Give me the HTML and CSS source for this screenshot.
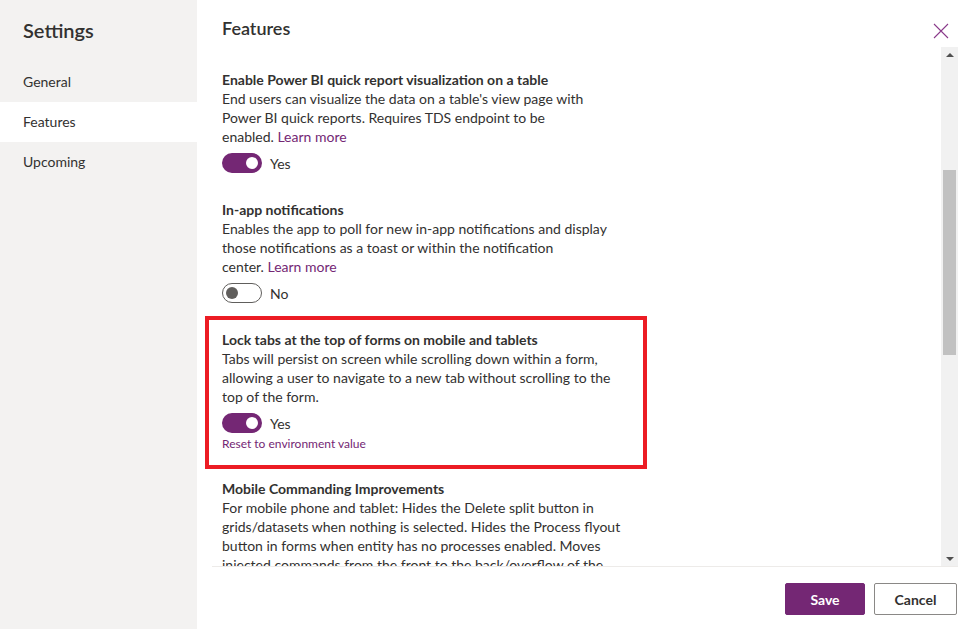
FILE: index.html
```html
<!DOCTYPE html>
<html>
<head>
<meta charset="utf-8">
<link rel="stylesheet" href="styles.css">
</head>
<body>
<div class="page">
  <aside class="sidebar">
    <h1 class="sidebar-title">Settings</h1>
    <nav class="nav">
      <div class="nav-item">General</div>
      <div class="nav-item active">Features</div>
      <div class="nav-item">Upcoming</div>
    </nav>
  </aside>
  <main class="main">
    <header class="header">
      <h2 class="header-title">Features</h2>
      <button class="close" aria-label="Close">
        <svg width="16" height="16" viewBox="0 0 16 16"><path d="M1 1 L15 15 M15 1 L1 15" stroke="#8a3a8a" stroke-width="1.1" fill="none"/></svg>
      </button>
    </header>
    <div class="scroll-row">
      <div class="content">
        <section class="item">
          <div class="item-title">Enable Power BI quick report visualization on a table</div>
          <div class="item-desc">End users can visualize the data on a table's view page with<br>Power BI quick reports. Requires TDS endpoint to be<br>enabled. <a class="link">Learn more</a></div>
          <div class="toggle-row"><span class="toggle on"><span class="knob"></span></span><span class="toggle-label">Yes</span></div>
        </section>
        <section class="item">
          <div class="item-title">In-app notifications</div>
          <div class="item-desc">Enables the app to poll for new in-app notifications and display<br>those notifications as a toast or within the notification<br>center. <a class="link">Learn more</a></div>
          <div class="toggle-row"><span class="toggle off"><span class="knob"></span></span><span class="toggle-label">No</span></div>
        </section>
        <section class="item highlight">
          <div class="item-title">Lock tabs at the top of forms on mobile and tablets</div>
          <div class="item-desc">Tabs will persist on screen while scrolling down within a form,<br>allowing a user to navigate to a new tab without scrolling to the<br>top of the form.</div>
          <div class="toggle-row"><span class="toggle on"><span class="knob"></span></span><span class="toggle-label">Yes</span></div>
          <div class="reset">Reset to environment value</div>
        </section>
        <section class="item">
          <div class="item-title">Mobile Commanding Improvements</div>
          <div class="item-desc">For mobile phone and tablet: Hides the Delete split button in<br>grids/datasets when nothing is selected. Hides the Process flyout<br>button in forms when entity has no processes enabled. Moves<br>injected commands from the front to the back/overflow of the</div>
        </section>
      </div>
      <div class="scrollbar">
        <div class="arrow up"></div>
        <div class="track"><div class="thumb"></div></div>
        <div class="arrow down"></div>
      </div>
    </div>
    <footer class="footer">
      <button class="btn primary">Save</button>
      <button class="btn secondary">Cancel</button>
    </footer>
  </main>
</div>
</body>
</html>
```

FILE: styles.css
```css
*, *::before, *::after { box-sizing: border-box; }
html, body { margin: 0; padding: 0; }
body {
  font-family: Lato, "Open Sans", "Liberation Sans", sans-serif;
  color: #323130;
  background: #ffffff;
}
.page {
  display: flex;
  width: 972px;
  height: 629px;
  overflow: hidden;
}
.sidebar {
  width: 197px;
  flex: none;
  background: #f3f2f1;
  padding-top: 16px;
}
.sidebar-title {
  margin: 0 0 18px 23px;
  font-size: 20px;
  line-height: 28px;
  font-weight: 600;
  color: #323130;
}
.nav-item {
  height: 40px;
  line-height: 40px;
  padding-left: 23px;
  font-size: 14px;
  color: #323130;
}
.nav-item.active {
  background: #ffffff;
}
.main {
  flex: 1;
  display: flex;
  flex-direction: column;
  position: relative;
  background: #ffffff;
}
.header {
  height: 47px;
  flex: none;
  padding-left: 25px;
  padding-top: 15px;
}
.header-title {
  margin: 0;
  font-size: 18px;
  line-height: 26px;
  font-weight: 600;
  color: #323130;
}
.close {
  position: absolute;
  top: 22px;
  right: 22px;
  width: 18px;
  height: 18px;
  padding: 1px;
  border: 0;
  background: transparent;
  display: flex;
}
.scroll-row {
  height: 520px;
  flex: none;
  display: flex;
  margin: 0 14px 0 0;
  position: relative;
}
.scroll-row::after {
  content: "";
  position: absolute;
  left: 15px;
  right: 0;
  bottom: 0;
  height: 1px;
  background: #edebe9;
}
.content {
  flex: 1;
  overflow: hidden;
  padding: 23px 0 0 25px;
}
.item {
  margin-bottom: 27px;
  position: relative;
}
.item-title {
  font-size: 14px;
  line-height: 19px;
  font-weight: 700;
  color: #323130;
}
.item-desc {
  font-size: 14px;
  line-height: 19px;
  color: #323130;
}
.link {
  color: #742774;
}
.toggle-row {
  display: flex;
  align-items: center;
  gap: 8px;
  margin-top: 7px;
  height: 20px;
}
.toggle {
  width: 40px;
  height: 20px;
  border-radius: 10px;
  display: flex;
  align-items: center;
  padding: 0 4px;
}
.toggle .knob {
  width: 12px;
  height: 12px;
  border-radius: 50%;
}
.toggle.on {
  background: #742774;
  justify-content: flex-end;
}
.toggle.on .knob { background: #ffffff; }
.toggle.off {
  border: 1px solid #605e5c;
  background: #ffffff;
  padding: 0 3px;
}
.toggle.off .knob { background: #605e5c; }
.toggle-label {
  font-size: 14px;
  color: #323130;
}
.reset {
  margin-top: 3px;
  font-size: 12px;
  line-height: 16px;
  color: #742774;
}
.highlight::before {
  content: "";
  position: absolute;
  left: -17px;
  top: -14px;
  width: 442px;
  height: 153px;
  border: 4px solid #ec1c24;
  pointer-events: none;
}
.scrollbar {
  width: 17px;
  flex: none;
  background: #f1f1f1;
  display: flex;
  flex-direction: column;
  align-items: center;
}
.arrow {
  width: 0;
  height: 0;
  border-left: 4px solid transparent;
  border-right: 4px solid transparent;
  flex: none;
}
.arrow.up {
  margin-top: 6px;
  border-bottom: 4px solid #505050;
}
.arrow.down {
  margin-bottom: 6px;
  border-top: 4px solid #505050;
}
.track {
  flex: 1;
  width: 100%;
  padding: 113px 2px 0 2px;
}
.thumb {
  height: 185px;
  background: #c1c1c1;
}
.footer {
  flex: 1;
  display: flex;
  justify-content: flex-end;
  gap: 9px;
  padding: 16px 15px 0 0;
}
.btn {
  height: 32px;
  font-family: inherit;
  font-size: 14px;
  font-weight: 700;
  border-radius: 2px;
  padding: 0;
}
.btn.primary {
  width: 80px;
  background: #742774;
  color: #ffffff;
  border: 1px solid #742774;
}
.btn.secondary {
  width: 83px;
  background: #ffffff;
  color: #323130;
  border: 1px solid #8a8886;
}
```
